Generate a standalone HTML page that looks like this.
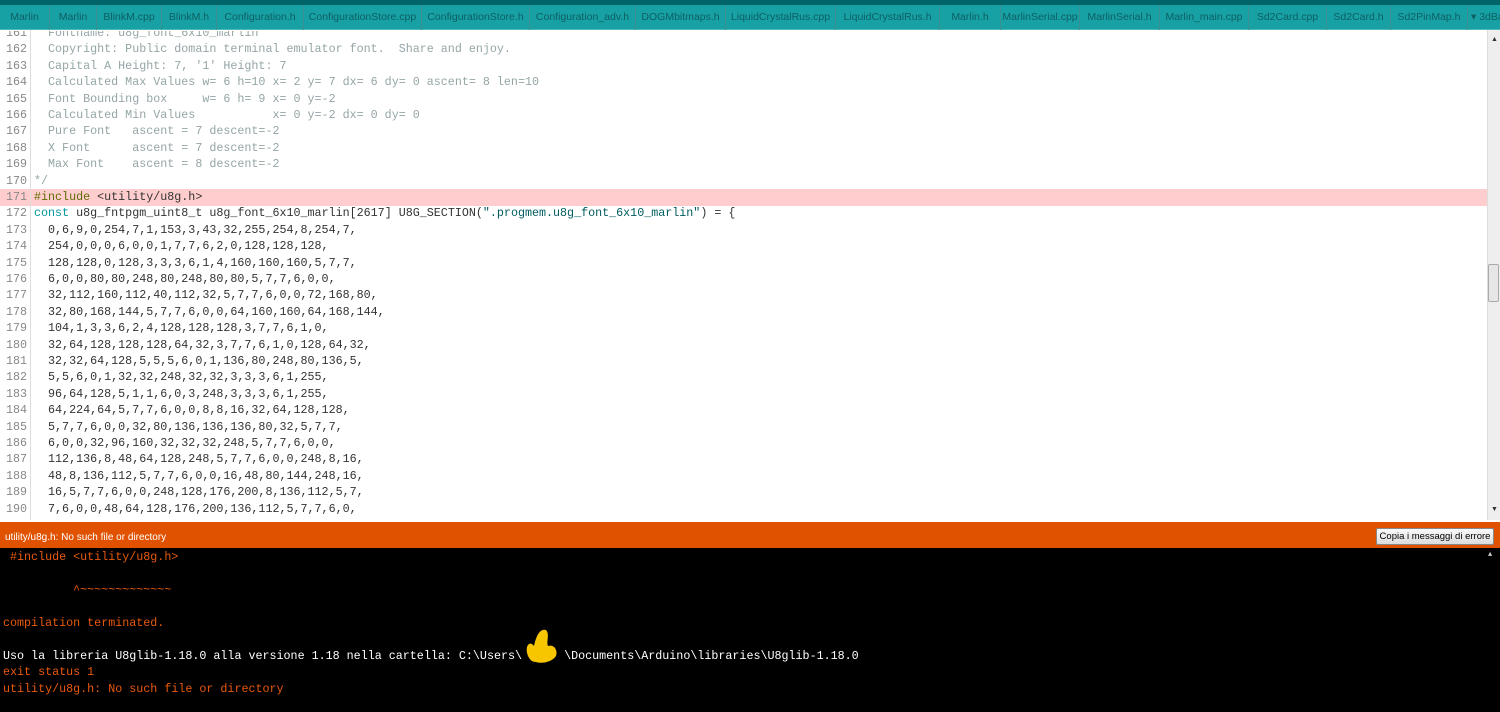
<!DOCTYPE html>
<html><head><meta charset="utf-8"><style>
*{margin:0;padding:0;box-sizing:border-box}
body{width:1500px;height:712px;overflow:hidden;background:#fff;position:relative;font-family:"Liberation Sans",sans-serif}
#top{position:absolute;left:0;top:0;width:1500px;height:5px;background:#006468}
#tabs{position:absolute;left:0;top:5px;width:1500px;height:25px;background:#17a1a5;border-bottom:1px solid #4db7b9}
.tab{position:absolute;top:0;height:25px;border-right:1px solid #3a8f92;color:#0d5f62;font-size:10.5px;line-height:25px;text-align:center;white-space:nowrap;overflow:hidden}
#ed{position:absolute;left:0;top:31px;width:1487px;height:489px;overflow:hidden;font-family:"Liberation Mono",monospace;font-size:11.7px}
.ln{position:absolute;left:0;width:1487px;height:16.4px;line-height:16.4px;white-space:pre}
.ln .n{position:absolute;left:0;width:27px;text-align:right;color:#888}
.ln .c{position:absolute;left:34px;color:#333}
.cm{color:#95a5a6!important}
#gut{position:absolute;left:30px;top:30px;width:1px;height:490px;background:#ddd}
#sb{position:absolute;left:1487px;top:30px;width:13px;height:490px;background:#eee;border-left:1px solid #ddd}
#thumb{position:absolute;left:1488px;top:264px;width:11px;height:38px;background:#e6e6e6;border:1px solid #aaa;border-radius:2px}
#err{position:absolute;left:0;top:522px;width:1500px;height:26px;background:#e05200;color:#fff;font-size:10px;line-height:32px;padding-left:5px}
#btn{position:absolute;left:1376px;top:528px;width:118px;height:17px;background:linear-gradient(#fafafa,#dcdcdc);border:1px solid #888;border-radius:2px;font-size:9.5px;color:#000;text-align:center;line-height:15px}
#con{position:absolute;left:0;top:548px;width:1500px;height:164px;background:#000;font-family:"Liberation Mono",monospace;font-size:11.7px}
.cl{position:absolute;left:3px;white-space:pre;color:#e8590c;line-height:16.4px}
.w{color:#fff}
</style></head><body>
<div id="top"></div>
<div id="tabs">
<div class="tab" style="left:0;width:50px">Marlin</div>
<div class="tab" style="left:50px;width:47px">Marlin</div>
<div class="tab" style="left:97px;width:65px">BlinkM.cpp</div>
<div class="tab" style="left:162px;width:55px">BlinkM.h</div>
<div class="tab" style="left:217px;width:87px">Configuration.h</div>
<div class="tab" style="left:304px;width:118px">ConfigurationStore.cpp</div>
<div class="tab" style="left:422px;width:108px">ConfigurationStore.h</div>
<div class="tab" style="left:530px;width:106px">Configuration_adv.h</div>
<div class="tab" style="left:636px;width:90px">DOGMbitmaps.h</div>
<div class="tab" style="left:726px;width:110px">LiquidCrystalRus.cpp</div>
<div class="tab" style="left:836px;width:104px">LiquidCrystalRus.h</div>
<div class="tab" style="left:940px;width:61px">Marlin.h</div>
<div class="tab" style="left:1001px;width:79px">MarlinSerial.cpp</div>
<div class="tab" style="left:1080px;width:80px">MarlinSerial.h</div>
<div class="tab" style="left:1160px;width:89px">Marlin_main.cpp</div>
<div class="tab" style="left:1249px;width:78px">Sd2Card.cpp</div>
<div class="tab" style="left:1327px;width:64px">Sd2Card.h</div>
<div class="tab" style="left:1391px;width:77px">Sd2PinMap.h</div>
<div class="tab" style="left:1468px;width:32px;border:none;text-align:left;padding-left:3px">▾ 3dBa</div>
</div>
<div id="ed">
<div style="position:absolute;left:0;top:158px;width:1487px;height:17px;background:#ffcdcd"></div>
<div class="ln" style="top:-6px"><span class="n">161</span><span class="c cm">  Fontname: u8g_font_6x10_marlin</span></div>
<div class="ln" style="top:10.4px"><span class="n">162</span><span class="c cm">  Copyright: Public domain terminal emulator font.  Share and enjoy.</span></div>
<div class="ln" style="top:26.8px"><span class="n">163</span><span class="c cm">  Capital A Height: 7, '1' Height: 7</span></div>
<div class="ln" style="top:43.2px"><span class="n">164</span><span class="c cm">  Calculated Max Values w= 6 h=10 x= 2 y= 7 dx= 6 dy= 0 ascent= 8 len=10</span></div>
<div class="ln" style="top:59.6px"><span class="n">165</span><span class="c cm">  Font Bounding box     w= 6 h= 9 x= 0 y=-2</span></div>
<div class="ln" style="top:76px"><span class="n">166</span><span class="c cm">  Calculated Min Values           x= 0 y=-2 dx= 0 dy= 0</span></div>
<div class="ln" style="top:92.4px"><span class="n">167</span><span class="c cm">  Pure Font   ascent = 7 descent=-2</span></div>
<div class="ln" style="top:108.8px"><span class="n">168</span><span class="c cm">  X Font      ascent = 7 descent=-2</span></div>
<div class="ln" style="top:125.2px"><span class="n">169</span><span class="c cm">  Max Font    ascent = 8 descent=-2</span></div>
<div class="ln" style="top:141.6px"><span class="n">170</span><span class="c cm">*/</span></div>
<div class="ln" style="top:158px"><span class="n">171</span><span class="c"><span style="color:#5e6d03">#include</span> &lt;utility/u8g.h&gt;</span></div>
<div class="ln" style="top:174.4px"><span class="n">172</span><span class="c"><span style="color:#00979c">const</span> u8g_fntpgm_uint8_t u8g_font_6x10_marlin[2617] U8G_SECTION(<span style="color:#005c5f">".progmem.u8g_font_6x10_marlin"</span>) = {</span></div>
<div class="ln" style="top:190.8px"><span class="n">173</span><span class="c">  0,6,9,0,254,7,1,153,3,43,32,255,254,8,254,7,</span></div>
<div class="ln" style="top:207.2px"><span class="n">174</span><span class="c">  254,0,0,0,6,0,0,1,7,7,6,2,0,128,128,128,</span></div>
<div class="ln" style="top:223.6px"><span class="n">175</span><span class="c">  128,128,0,128,3,3,3,6,1,4,160,160,160,5,7,7,</span></div>
<div class="ln" style="top:240px"><span class="n">176</span><span class="c">  6,0,0,80,80,248,80,248,80,80,5,7,7,6,0,0,</span></div>
<div class="ln" style="top:256.4px"><span class="n">177</span><span class="c">  32,112,160,112,40,112,32,5,7,7,6,0,0,72,168,80,</span></div>
<div class="ln" style="top:272.8px"><span class="n">178</span><span class="c">  32,80,168,144,5,7,7,6,0,0,64,160,160,64,168,144,</span></div>
<div class="ln" style="top:289.2px"><span class="n">179</span><span class="c">  104,1,3,3,6,2,4,128,128,128,3,7,7,6,1,0,</span></div>
<div class="ln" style="top:305.6px"><span class="n">180</span><span class="c">  32,64,128,128,128,64,32,3,7,7,6,1,0,128,64,32,</span></div>
<div class="ln" style="top:322px"><span class="n">181</span><span class="c">  32,32,64,128,5,5,5,6,0,1,136,80,248,80,136,5,</span></div>
<div class="ln" style="top:338.4px"><span class="n">182</span><span class="c">  5,5,6,0,1,32,32,248,32,32,3,3,3,6,1,255,</span></div>
<div class="ln" style="top:354.8px"><span class="n">183</span><span class="c">  96,64,128,5,1,1,6,0,3,248,3,3,3,6,1,255,</span></div>
<div class="ln" style="top:371.2px"><span class="n">184</span><span class="c">  64,224,64,5,7,7,6,0,0,8,8,16,32,64,128,128,</span></div>
<div class="ln" style="top:387.6px"><span class="n">185</span><span class="c">  5,7,7,6,0,0,32,80,136,136,136,80,32,5,7,7,</span></div>
<div class="ln" style="top:404px"><span class="n">186</span><span class="c">  6,0,0,32,96,160,32,32,32,248,5,7,7,6,0,0,</span></div>
<div class="ln" style="top:420.4px"><span class="n">187</span><span class="c">  112,136,8,48,64,128,248,5,7,7,6,0,0,248,8,16,</span></div>
<div class="ln" style="top:436.8px"><span class="n">188</span><span class="c">  48,8,136,112,5,7,7,6,0,0,16,48,80,144,248,16,</span></div>
<div class="ln" style="top:453.2px"><span class="n">189</span><span class="c">  16,5,7,7,6,0,0,248,128,176,200,8,136,112,5,7,</span></div>
<div class="ln" style="top:469.6px"><span class="n">190</span><span class="c">  7,6,0,0,48,64,128,176,200,136,112,5,7,7,6,0,</span></div>
</div>
<div id="gut"></div>
<div id="sb"><div style="position:absolute;left:3px;top:6px;font-size:7px;color:#333">▲</div><div style="position:absolute;left:3px;top:476px;font-size:7px;color:#333">▼</div></div>
<div id="thumb"></div>
<div id="err">utility/u8g.h: No such file or directory</div>
<div id="btn">Copia i messaggi di errore</div>
<div id="con">
<div class="cl" style="top:1px"> #include &lt;utility/u8g.h&gt;</div>
<div class="cl" style="top:34px">          ^~~~~~~~~~~~~~</div>
<div class="cl" style="top:67px">compilation terminated.</div>
<div class="cl w" style="top:100px">Uso la libreria U8glib-1.18.0 alla versione 1.18 nella cartella: C:\Users\      \Documents\Arduino\libraries\U8glib-1.18.0</div>
<div class="cl" style="top:116.4px">exit status 1</div>
<div class="cl" style="top:132.8px">utility/u8g.h: No such file or directory</div>
<svg style="position:absolute;left:520px;top:78px" width="42" height="42" viewBox="0 0 42 42"><path d="M8 30 C4 20 10 14 14 20 C16 10 20 2 26 4 C30 8 26 16 28 20 C34 18 38 24 36 30 C32 36 22 38 16 36 C12 36 10 34 8 30Z" fill="#f7c600"/></svg>
<div style="position:absolute;left:1488px;top:3px;font-size:7px;color:#ccc">▲</div>
</div>
</body></html>
